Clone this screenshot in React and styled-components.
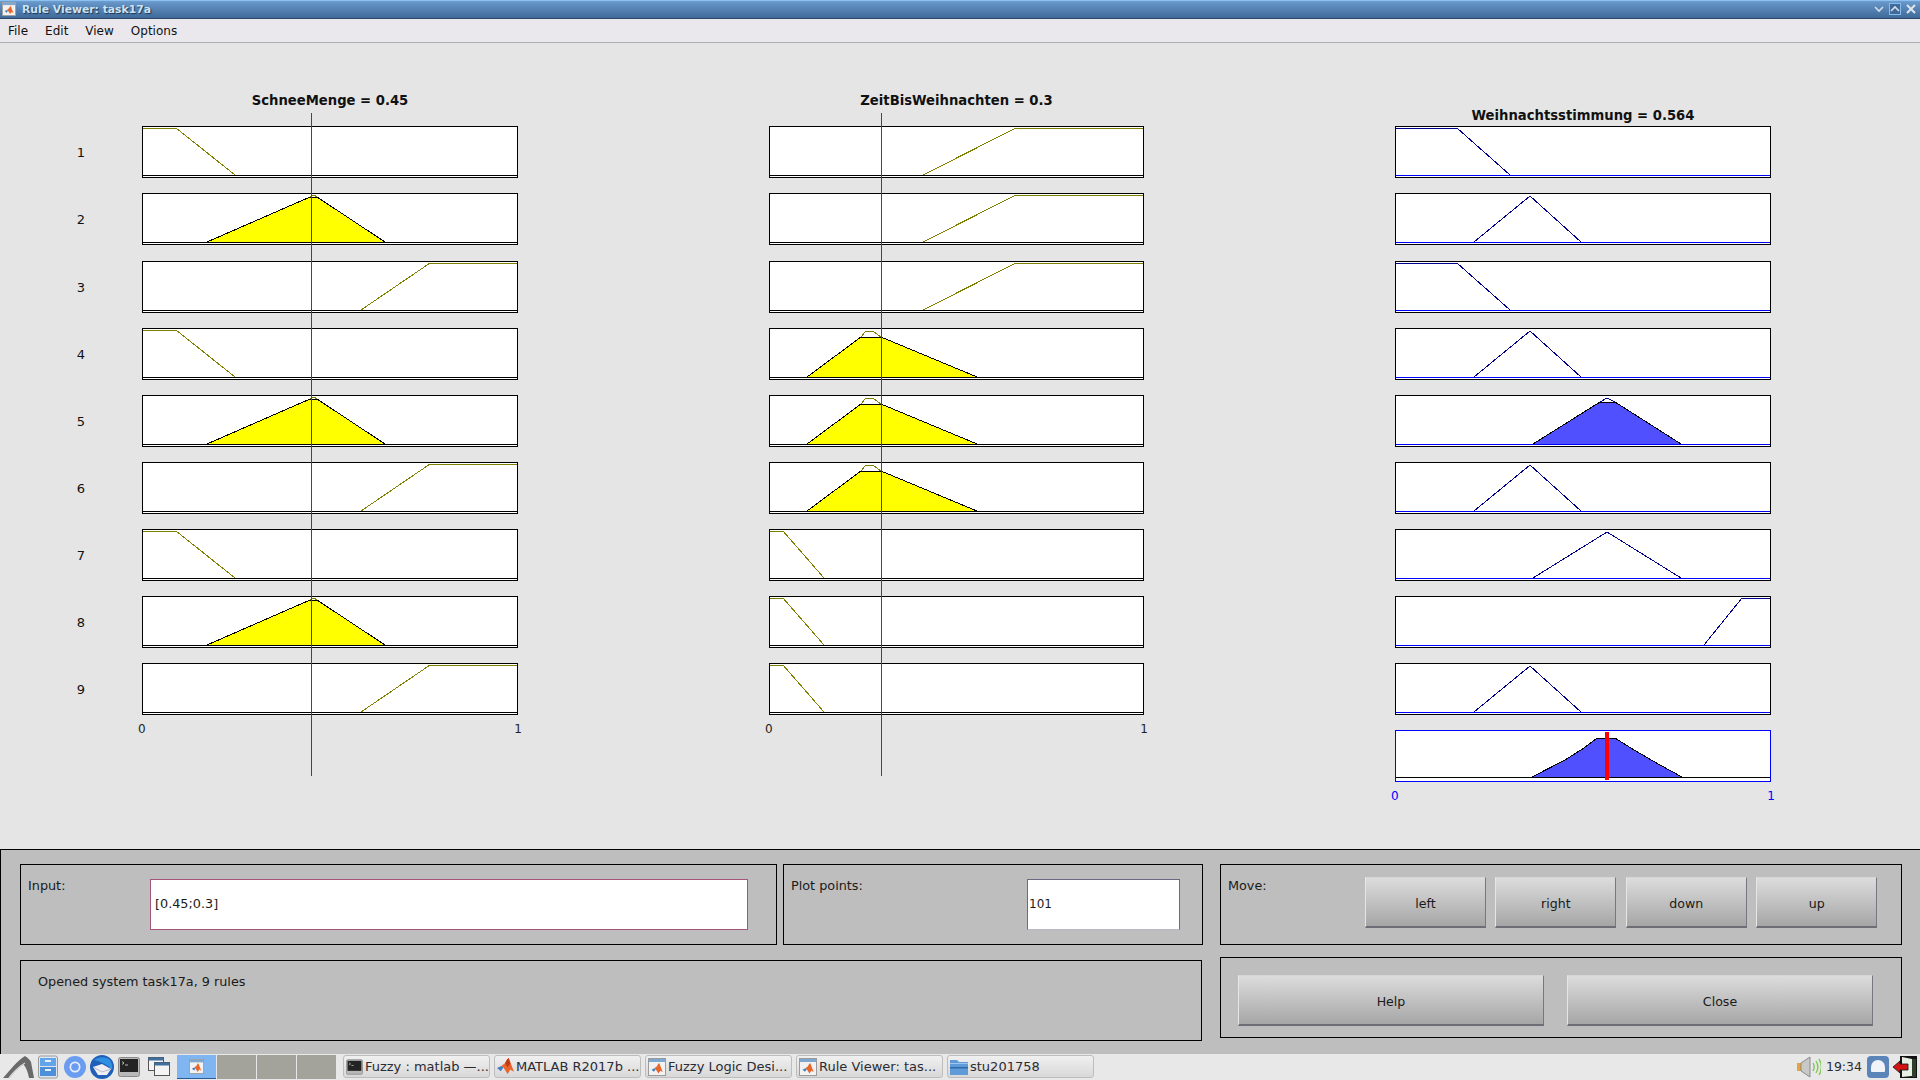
import React from 'react'
import styled, { createGlobalStyle } from 'styled-components'

const GlobalStyle = createGlobalStyle`
  html, body { margin: 0; padding: 0; background: #e5e5e5; }
  * { box-sizing: border-box; }
`

const Screen = styled.div`
  width: 1920px;
  height: 1080px;
  display: flex;
  flex-direction: column;
  overflow: hidden;
  font-family: "DejaVu Sans", sans-serif;
  color: #111;
  background: #e5e5e5;
`

const TitleBar = styled.div`
  height: 19px;
  display: flex;
  align-items: center;
  padding: 0 3px 1px 2px;
  background: linear-gradient(#6f9fd2 0, #6593c6 2px, #3f6a9a 100%);
  border-top: 1px solid #8cc0f0;
  border-bottom: 1px solid #2a4568;
`

const TitleText = styled.span`
  margin-left: 6px;
  font-size: 10.8px;
  font-weight: 700;
  color: #c9e2f5;
  text-shadow: 1px 1px 1px #1d3553;
  flex: 1;
`

const WinButton = styled.span`
  width: 12px;
  height: 12px;
  margin-left: 4px;
  display: flex;
  align-items: center;
  justify-content: center;
  border: 1px solid ${({ $active }) => ($active ? '#86bdf0' : 'transparent')};
  background: ${({ $active }) => ($active ? '#3f6a9a' : 'transparent')};
`

const MenuBar = styled.div`
  height: 24px;
  display: flex;
  align-items: center;
  gap: 17px;
  padding-left: 8px;
  background: #eae8ec;
  border-bottom: 1px solid #adadad;
  font-size: 12px;
`

const PlotArea = styled.div`
  height: 806px;
  display: flex;
  background: #e5e5e5;
`

const RowNumbers = styled.div`
  width: 142px;
  padding-top: 84px;
  padding-right: 57px;
  display: flex;
  flex-direction: column;
  gap: 15px;
  text-align: right;
`

const RowNumber = styled.div`
  height: 52px;
  line-height: 52px;
  font-size: 13px;
  &:nth-child(3) { margin-top: 1px; }
`

const RuleColumn = styled.div`
  position: relative;
  width: ${({ $w }) => $w}px;
  margin-right: ${({ $mr }) => $mr}px;
`

const ColumnTitle = styled.div`
  height: 83px;
  display: flex;
  align-items: flex-end;
  justify-content: center;
  padding-bottom: ${({ $pb }) => $pb}px;
  font-size: 13.2px;
  line-height: 15px;
  font-weight: 700;
  white-space: nowrap;
`

const PlotStack = styled.div`
  display: flex;
  flex-direction: column;
  gap: 15px;
`

const PlotBox = styled.div`
  height: 52px;
  background: #fff;
  border: 1px solid ${({ $blue }) => ($blue ? '#0000ff' : '#000')};
  &:nth-child(3) { margin-top: 1px; }
  svg { display: block; }
`

const Cursor = styled.div`
  position: absolute;
  left: ${({ $x }) => $x}px;
  top: 70px;
  width: 1px;
  height: 663px;
  background: #e8000b;
`

const AxisRow = styled.div`
  display: flex;
  justify-content: space-between;
  margin: 7px -4px 0;
  font-size: 12px;
  line-height: 14px;
  color: ${({ $blue }) => ($blue ? '#0000ff' : '#222')};
`

const ControlPanel = styled.div`
  height: 205px;
  display: flex;
  gap: 17px;
  padding: 14px 18px 0 19px;
  background: #bebebe;
  border-top: 1px solid #000;
  border-left: 1px solid #000;
`

const LeftControls = styled.div`
  width: 1183px;
  display: flex;
  flex-direction: column;
  gap: 15px;
`

const RightControls = styled.div`
  width: 682px;
  display: flex;
  flex-direction: column;
  gap: 12px;
`

const ControlRow = styled.div`
  display: flex;
  gap: 6px;
`

const Frame = styled.div`
  width: ${({ $w }) => ($w ? `${$w}px` : '100%')};
  height: 81px;
  display: flex;
  border: 1px solid #000;
  padding: ${({ $pad }) => $pad};
  font-size: 12.8px;
  color: #1a1a1a;
`

const FieldLabel = styled.span`
  width: ${({ $w }) => $w}px;
  line-height: 14px;
  margin-top: ${({ $mt }) => $mt || 0}px;
`

const EditField = styled.div`
  width: ${({ $w }) => $w}px;
  height: 51px;
  display: flex;
  align-items: center;
  padding: 0 0 2px ${({ $pl }) => $pl}px;
  background: #fff;
  font-size: ${({ $fs }) => $fs}px;
  border: 1px solid ${({ $accent }) => $accent};
  border-bottom-color: ${({ $under }) => $under};
  color: #1a1a1a;
`

const StatusText = styled.div`
  padding: 14px 0 0 17px;
  line-height: 14px;
`

const ButtonRow = styled.div`
  display: flex;
  gap: ${({ $gap }) => $gap}px;
`

const PushButton = styled.button`
  width: ${({ $w }) => $w}px;
  height: 51px;
  padding: 2px 0 0;
  font: 12.6px "DejaVu Sans", sans-serif;
  color: #1a1a1a;
  background: linear-gradient(#dcdcdc, #a6a6a6);
  border: 1px solid #c4c4c4;
  border-left-color: #e6e6e6;
  border-top-color: #d6d6d6;
  border-right-color: #77777f;
  border-bottom: 2px solid #6d6d75;
`

const TaskBar = styled.div`
  flex: 1;
  display: flex;
  align-items: center;
  background: #e8e8e8;
  padding: 0 0 1px 3px;
  font-size: 13px;
  color: #2b2b33;
`

const Launcher = styled.span`
  display: flex;
  width: ${({ $w }) => $w}px;
  margin-left: ${({ $ml }) => $ml || 0}px;
`

const Pager = styled.div`
  display: flex;
  gap: 1px;
  margin-left: 7px;
`

const PagerCell = styled.div`
  width: 39px;
  height: 24px;
  display: flex;
  align-items: center;
  justify-content: center;
  background: ${({ $on }) => ($on ? '#7fb6f2' : '#a3a39b')};
  border-bottom: 1px solid ${({ $on }) => ($on ? '#2b5a94' : '#a3a39b')};
`

const TaskButtons = styled.div`
  display: flex;
  gap: 4px;
  margin-left: 7px;
`

const TaskButton = styled.div`
  width: 147px;
  height: 23px;
  display: flex;
  align-items: center;
  gap: 2px;
  padding-left: 2px;
  white-space: nowrap;
  overflow: hidden;
  border: 1px solid #bdbdbd;
  border-radius: 3px;
  background: linear-gradient(#f0f0f0, #d8d8d8);
`

const Tray = styled.div`
  margin-left: auto;
  display: flex;
  align-items: center;
  padding-right: 3px;
`

const Clock = styled.span`
  margin: 0 5px;
  font-size: 12.5px;
`

const ExitIcon = styled.svg`
  margin-left: 4px;
`

const BOX_W = 376
const BOX_H = 52
const OLIVE = '#808000'
const NAVY = '#00008b'

const pts = (list) => list.map((p) => p.join(',')).join(' ')

const LEFT = {
  low: { line: [[0, 2], [34, 2], [93, 49]] },
  mid: { fill: [[65, 49], [168, 4], [175, 4], [243, 49]], tip: [[168, 4], [172, 2], [175, 4]] },
  high: { line: [[219, 49], [288, 2], [376, 2]] },
}

const MIDDLE = {
  low: { line: [[0, 2], [14, 2], [55, 49]] },
  mid: {
    fill: [[38, 49], [92, 9], [112, 9], [208, 49]],
    tip: [[92, 9], [96, 4], [100, 3], [105, 4], [112, 9]],
  },
  high: { line: [[154, 49], [247, 2], [375, 2]] },
}

const RIGHT = {
  low: { line: [[0, 2], [62, 2], [115, 49]] },
  midLow: { line: [[79, 49], [135, 3], [186, 49]] },
  mid: { line: [[138, 49], [212, 3], [286, 49]] },
  midFill: { fill: [[138, 49], [205, 7], [220, 7], [286, 49]], tip: [[205, 7], [212, 3], [220, 7]] },
  high: { line: [[309, 49], [347, 2], [376, 2]] },
}

const LEFT_ROWS = ['low', 'mid', 'high', 'low', 'mid', 'high', 'low', 'mid', 'high']
const MIDDLE_ROWS = ['high', 'high', 'high', 'mid', 'mid', 'mid', 'low', 'low', 'low']
const RIGHT_ROWS = ['low', 'midLow', 'low', 'midLow', 'midFill', 'midLow', 'mid', 'high', 'midLow']

const MfPlot = ({ shape, w, lineColor, fillColor, baseColor }) => (
  <PlotBox>
    <svg width={w - 2} height={BOX_H - 2} viewBox={`1 1 ${w - 2} ${BOX_H - 2}`} shapeRendering="crispEdges">
      {shape.fill && <polygon points={pts(shape.fill)} fill={fillColor} stroke="#000" strokeWidth="1" />}
      {shape.tip && <polyline points={pts(shape.tip)} fill="none" stroke={lineColor} strokeWidth="1" />}
      {shape.line && <polyline points={pts(shape.line)} fill="none" stroke={lineColor} strokeWidth="1" />}
      <line x1="0" y1="49.5" x2={w} y2="49.5" stroke={baseColor} strokeWidth="1" />
    </svg>
  </PlotBox>
)

const AggregatePlot = () => (
  <PlotBox $blue>
    <svg width={BOX_W - 2} height={BOX_H - 2} viewBox={`1 1 ${BOX_W - 2} ${BOX_H - 2}`} shapeRendering="crispEdges">
      <polygon
        points="137,47 170,30 189,18 202,8 220,8 239,20 265,35 287,47"
        fill="#5050ff"
        stroke="#000"
        strokeWidth="1"
      />
      <line x1="0" y1="47.5" x2={BOX_W} y2="47.5" stroke="#000" strokeWidth="1" />
      <rect x="210" y="2" width="4" height="48" fill="#ff0000" />
    </svg>
  </PlotBox>
)

const MatlabIcon = ({ size = 14 }) => (
  <svg width={size} height={size} viewBox="0 0 16 16">
    <path d="M0 9.500 4 7.500 6 9 3.600 12.500z" fill="#3f7fc4" />
    <path d="M4 7.500 7.500 5 9.500 1.500 11 0 16 13 12.500 11 10 15 6 9z" fill="#e8662a" />
    <path d="M9.500 1.500 11 0 12.500 5 10 9 7.500 5z" fill="#c23a17" />
  </svg>
)

const WindowIcon = ({ size = 18 }) => (
  <svg width={size} height={size} viewBox="0 0 18 18">
    <rect x="0.5" y="0.5" width="17" height="17" fill="#f2f2f2" stroke="#9a9a9a" />
    <rect x="1" y="1" width="16" height="3" fill="#7fa8d0" />
    <g transform="translate(3.5 5) scale(0.7)">
      <path d="M0 9.500 4 7.500 6 9 3.600 12.500z" fill="#3f7fc4" />
      <path d="M4 7.500 7.500 5 9.500 1.500 11 0 16 13 12.500 11 10 15 6 9z" fill="#e8662a" />
    </g>
  </svg>
)

const TerminalIcon = ({ w = 22, h = 20 }) => (
  <svg width={w} height={h} viewBox="0 0 22 20">
    <rect x="0.5" y="0.5" width="21" height="19" rx="2" fill="#b8b8b8" stroke="#8a8a8a" />
    <rect x="2" y="2" width="18" height="13" fill="#232323" />
    <path d="M4 4.500 6 6 4 7.500M7 8h3" stroke="#ddd" strokeWidth="0.8" fill="none" />
  </svg>
)

const App = () => (
  <Screen>
    <GlobalStyle />
    <TitleBar>
      <WindowIcon size={14} />
      <TitleText>Rule Viewer: task17a</TitleText>
      <WinButton>
        <svg width="10" height="8" viewBox="0 0 10 8"><path d="M1 2 5 6 9 2" stroke="#d5dfe9" strokeWidth="1.6" fill="none" /></svg>
      </WinButton>
      <WinButton $active>
        <svg width="10" height="8" viewBox="0 0 10 8"><path d="M1 6 5 2 9 6" stroke="#d5dfe9" strokeWidth="1.6" fill="none" /></svg>
      </WinButton>
      <WinButton>
        <svg width="10" height="10" viewBox="0 0 10 10"><path d="M1 1 9 9M9 1 1 9" stroke="#dfe5ec" strokeWidth="2" fill="none" /></svg>
      </WinButton>
    </TitleBar>
    <MenuBar>
      <span>File</span>
      <span>Edit</span>
      <span>View</span>
      <span>Options</span>
    </MenuBar>

    <PlotArea>
      <RowNumbers>
        {LEFT_ROWS.map((_, i) => (
          <RowNumber key={i}>{i + 1}</RowNumber>
        ))}
      </RowNumbers>

      <RuleColumn $w={376} $mr={251}>
        <ColumnTitle $pb={18}>SchneeMenge = 0.45</ColumnTitle>
        <PlotStack>
          {LEFT_ROWS.map((k, i) => (
            <MfPlot key={i} shape={LEFT[k]} w={376} lineColor={OLIVE} fillColor="#ffff00" baseColor="#000" />
          ))}
        </PlotStack>
        <AxisRow>
          <span>0</span>
          <span>1</span>
        </AxisRow>
        <Cursor $x={169} />
      </RuleColumn>

      <RuleColumn $w={375} $mr={251}>
        <ColumnTitle $pb={18}>ZeitBisWeihnachten = 0.3</ColumnTitle>
        <PlotStack>
          {MIDDLE_ROWS.map((k, i) => (
            <MfPlot key={i} shape={MIDDLE[k]} w={375} lineColor={OLIVE} fillColor="#ffff00" baseColor="#000" />
          ))}
        </PlotStack>
        <AxisRow>
          <span>0</span>
          <span>1</span>
        </AxisRow>
        <Cursor $x={112} />
      </RuleColumn>

      <RuleColumn $w={376} $mr={0}>
        <ColumnTitle $pb={3}>Weihnachtsstimmung = 0.564</ColumnTitle>
        <PlotStack>
          {RIGHT_ROWS.map((k, i) => (
            <MfPlot key={i} shape={RIGHT[k]} w={376} lineColor={NAVY} fillColor="#5050ff" baseColor="#0000ff" />
          ))}
          <AggregatePlot />
        </PlotStack>
        <AxisRow $blue>
          <span>0</span>
          <span>1</span>
        </AxisRow>
      </RuleColumn>
    </PlotArea>

    <ControlPanel>
      <LeftControls>
        <ControlRow>
          <Frame $w={757} $pad="14px 0 0 7px">
            <FieldLabel $w={122}>Input:</FieldLabel>
            <EditField $w={598} $pl={4} $fs={12.8} $accent="#a5547c" $under="#a5547c">[0.45;0.3]</EditField>
          </Frame>
          <Frame $w={420} $pad="14px 0 0 7px">
            <FieldLabel $w={236}>Plot points:</FieldLabel>
            <EditField $w={153} $pl={1} $fs={12} $accent="#6a6a80" $under="#b8b8c8">101</EditField>
          </Frame>
        </ControlRow>
        <Frame $w={1182} $pad="0">
          <StatusText>Opened system task17a, 9 rules</StatusText>
        </Frame>
      </LeftControls>

      <RightControls>
        <Frame $pad="12px 0 0 7px">
          <FieldLabel $w={137} $mt={2}>Move:</FieldLabel>
          <ButtonRow $gap={9.4}>
            <PushButton $w={121}>left</PushButton>
            <PushButton $w={121}>right</PushButton>
            <PushButton $w={121}>down</PushButton>
            <PushButton $w={121}>up</PushButton>
          </ButtonRow>
        </Frame>
        <Frame $pad="17px 0 0 17px">
          <ButtonRow $gap={23}>
            <PushButton $w={306}>Help</PushButton>
            <PushButton $w={306}>Close</PushButton>
          </ButtonRow>
        </Frame>
      </RightControls>
    </ControlPanel>

    <TaskBar>
      <Launcher $w={33}>
        <svg width="32" height="24" viewBox="0 0 32 24">
          <path d="M0 23 C8 14 14 6 22 1 C25 3 27 5 28 7 L31 23 L26 23 C25 17 23 12 20 9 C15 12 10 17 6 23z" fill="#6a6a6a" />
          <path d="M6 23 C11 16 16 12 22 8" stroke="#cfcfcf" strokeWidth="1.5" fill="none" />
        </svg>
      </Launcher>
      <Launcher $w={20} $ml={2}>
        <svg width="20" height="24" viewBox="0 0 20 24">
          <rect x="0.5" y="1" width="19" height="22" rx="2" fill="#dfe6ee" stroke="#9a9a9a" />
          <rect x="2" y="3" width="16" height="8" fill="#62a5ea" />
          <rect x="2" y="12" width="16" height="9" fill="#4c90da" />
          <rect x="7" y="5" width="6" height="2" fill="#e8f1fb" />
          <rect x="7" y="14" width="6" height="2" fill="#e8f1fb" />
        </svg>
      </Launcher>
      <Launcher $w={22} $ml={6}>
        <svg width="22" height="22" viewBox="0 0 22 22">
          <circle cx="11" cy="11" r="11" fill="#6a9cf0" />
          <circle cx="11" cy="11" r="5.500" fill="#e6eefc" />
          <circle cx="11" cy="11" r="3.800" fill="#6a9cf0" />
        </svg>
      </Launcher>
      <Launcher $w={24} $ml={4}>
        <svg width="24" height="24" viewBox="0 0 24 24">
          <circle cx="12" cy="12" r="12" fill="#1f5fb8" />
          <path d="M4 5c4-3 11-4 16 0 2 3 3 7 2 10-4-5-10-8-18-10z" fill="#2f8fe0" />
          <path d="M3 12 12 9l9 5-4 6-9 0z" fill="#eeeef4" />
          <path d="M3 12l9 5 9-3" stroke="#b9b9c8" fill="none" />
        </svg>
      </Launcher>
      <Launcher $w={22} $ml={4}>
        <TerminalIcon />
      </Launcher>
      <Launcher $w={22} $ml={8}>
        <svg width="22" height="20" viewBox="0 0 22 20">
          <rect x="0.5" y="0.5" width="15" height="13" fill="#f4f4f4" stroke="#555" />
          <rect x="0.5" y="0.5" width="15" height="3" fill="#3f6f9f" />
          <rect x="6.5" y="5.5" width="15" height="13" fill="#f4f4f4" stroke="#555" />
          <rect x="6.5" y="5.5" width="15" height="3" fill="#3f6f9f" />
        </svg>
      </Launcher>
      <Pager>
        <PagerCell $on>
          <WindowIcon size={15} />
        </PagerCell>
        <PagerCell />
        <PagerCell />
        <PagerCell />
      </Pager>
      <TaskButtons>
        <TaskButton>
          <TerminalIcon w={18} h={16} />
          <span>Fuzzy : matlab —...</span>
        </TaskButton>
        <TaskButton>
          <MatlabIcon size={17} />
          <span>MATLAB R2017b ...</span>
        </TaskButton>
        <TaskButton>
          <WindowIcon size={18} />
          <span>Fuzzy Logic Desi...</span>
        </TaskButton>
        <TaskButton>
          <WindowIcon size={18} />
          <span>Rule Viewer: tas...</span>
        </TaskButton>
        <TaskButton>
          <svg width="18" height="16" viewBox="0 0 18 16">
            <path d="M0 1h7l2 2h9v13H0z" fill="#5f9bd8" />
            <rect x="0" y="8" width="18" height="1.5" fill="#2f6aa8" />
            <rect x="0" y="4" width="18" height="1" fill="#9cc6ec" />
          </svg>
          <span>stu201758</span>
        </TaskButton>
      </TaskButtons>
      <Tray>
        <svg width="24" height="22" viewBox="0 0 24 22">
          <rect x="0" y="7" width="5" height="8" fill="#e8a33a" />
          <path d="M4 7 13 1v20l-9-6z" fill="#c8c8c8" stroke="#8a8a8a" />
          <path d="M16 7c1.500 2.500 1.500 5.500 0 8M19 5c2.500 4 2.500 8 0 12M22 3c3 5 3 11 0 16" stroke="#7dc850" strokeWidth="1.4" fill="none" />
        </svg>
        <Clock>19:34</Clock>
        <svg width="22" height="22" viewBox="0 0 22 22">
          <rect x="0" y="0" width="22" height="22" rx="4" fill="#5b85b8" />
          <path d="M4 15V11a7 7 0 0 1 14 0v4a1 1 0 0 1-1 1H5a1 1 0 0 1-1-1z" fill="#f0f3f8" />
        </svg>
        <ExitIcon width="24" height="22" viewBox="0 0 24 22">
          <rect x="7" y="0" width="17" height="22" fill="#111" />
          <path d="M9 1 19 3v17L9 21z" fill="#e6efe4" />
          <path d="M19 3h4v18h-4z" fill="#2f3f2c" />
          <path d="M0 11l7-6v3h8v6H7v3z" fill="#d31414" stroke="#111" strokeWidth="0.8" />
        </ExitIcon>
      </Tray>
    </TaskBar>
  </Screen>
)

export default App
